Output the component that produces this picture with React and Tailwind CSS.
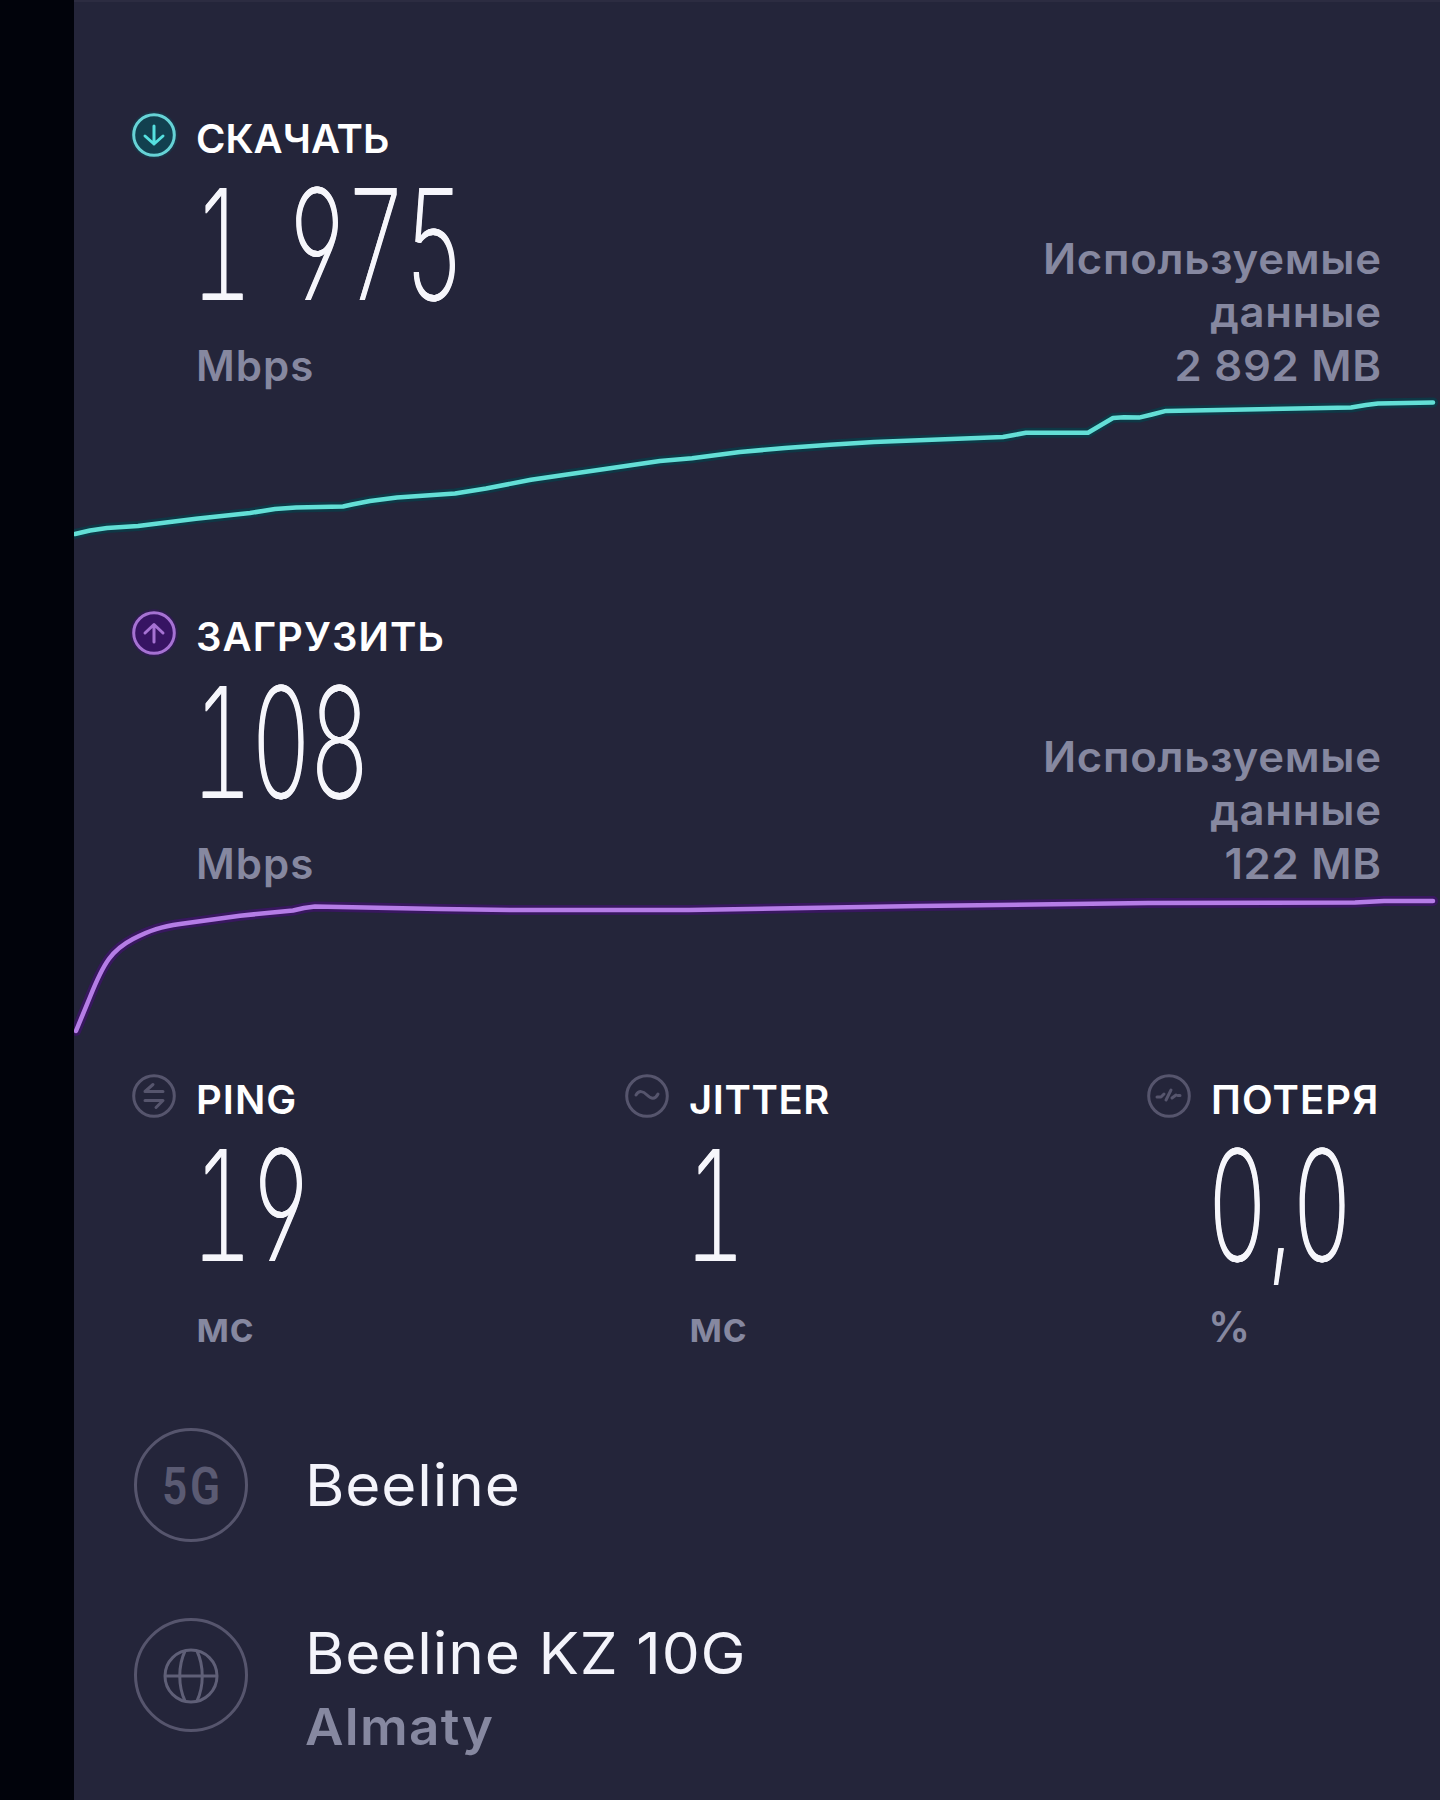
import React from 'react';

const downloadLine =
  'M75 534L90 530.5L107 528L138 526L196 518.8L250 513L275 509L296 507.5L343 506.5L352 504.5L370 501L397 497.5L455 493.5L486 488.5L531 479.8L598 470L660 461L692 458.3L740 452L785 448L830 444.7L874 442L1003 437L1014 435L1026 432.7L1088 432.7L1113 418L1124 417.3L1139 417.6L1152 414.5L1166 410.9L1351 407.5L1366 405L1378 403.4L1433 402.4';
const uploadLine =
  'M76 1031L90 997C104 962 112 950 133 939C150 930 162 926.5 180 924L240 915.7L293 910.5L304 908L315 906.5L440 909L517 910L689 910L919 906L1148 903L1355 902.5L1384 901L1433 901';

const RingIcon = ({ color, fill = 'none', children }) => (
  <svg
    viewBox="0 0 44 44"
    className="h-11 w-11 shrink-0 overflow-visible"
    fill="none"
    stroke={color}
    strokeWidth="3"
    strokeLinecap="round"
    strokeLinejoin="round"
  >
    {fill !== 'none' && <circle cx="22" cy="22" r="20.3" stroke={fill} strokeWidth="7" opacity="0.5" />}
    <circle cx="22" cy="22" r="20.3" strokeWidth="3" fill={fill} />
    {children}
  </svg>
);

const DownIcon = () => (
  <RingIcon color="#66d3d6" fill="#12404f">
    <path d="M22 13V31M13 23l9 8 9-8" stroke="#55e0e0" />
  </RingIcon>
);

const UpIcon = () => (
  <RingIcon color="#a672d3" fill="#371463">
    <path d="M22 31V13.5M13 22l9-8.5 9 8.5" />
  </RingIcon>
);

const PingIcon = () => (
  <RingIcon color="#56556d">
    <path d="M31 17.5H13l8-7M13 26.5h18l-7 7" />
  </RingIcon>
);

const JitterIcon = () => (
  <RingIcon color="#56556d">
    <path d="M11 21c3-5 7-4 11 0s8 5 11-1" />
  </RingIcon>
);

const LossIcon = () => (
  <RingIcon color="#56556d">
    <path d="M10 23h4l3-3M19 26l5-10M25 24l4-3M31 21.5h2" />
  </RingIcon>
);

const Metric = ({ icon, label, labelClass = '', value, valueClass = 'tracking-[-3.3px]', unit, unitClass = '' }) => (
  <div className="flex gap-[20px]">
    {icon}
    <div className="text-[40px]">
      <div className={`whitespace-nowrap font-semibold leading-[52px] text-white ${labelClass}`}>{label}</div>
      {/* Narrow digits: the slight horizontal shadow evens out stem weight after scaling */}
      <div
        className={`-ml-1 mt-[9px] h-[140px] w-[57px] origin-left scale-x-[0.61] whitespace-pre text-[154px] font-extralight leading-[140px] text-[#f6f6fb] [font-feature-settings:'tnum','cv04'] [text-shadow:0.8px_0_0_#f6f6fb,-0.8px_0_0_#f6f6fb] [word-spacing:21px] ${valueClass}`}
      >
        {value}
      </div>
      <div className={`mt-[27px] text-[42px] leading-[50px] text-[#8688a0] [font-weight:560] ${unitClass}`}>{unit}</div>
    </div>
  </div>
);

const UsedData = ({ amount }) => (
  <div className="-mb-px -mr-[2px] origin-right scale-x-[1.04] self-end text-right text-[42px] leading-[53.5px] tracking-[0.7px] text-[#8688a0] [font-weight:560]">
    Используемые
    <br />
    данные
    <br />
    {amount}
  </div>
);

const Chart = ({ d, top, stroke, glow }) => (
  <svg
    viewBox={`74 ${top} 1366 150`}
    className="mt-[5px] block h-[150px] w-[1366px]"
    fill="none"
    strokeLinecap="round"
    strokeLinejoin="round"
  >
    <path d={d} stroke={glow} strokeWidth="10" opacity="0.7" />
    <path d={d} stroke={stroke} strokeWidth="4.5" />
  </svg>
);

export default function App() {
  return (
    <div className="flex h-[1800px] w-[1440px] overflow-hidden bg-[#01030b] font-['Inter',sans-serif]">
      <main className="ml-[74px] w-[1366px] border-t-2 border-[#2c2c41] bg-[#24253a] pt-[111px]">
        <section className="h-[498px]">
          <div className="flex justify-between pl-[58px] pr-[60px]">
            <Metric icon={<DownIcon />} label="СКАЧАТЬ" value="1 975" unit="Mbps" unitClass="tracking-[1px]" />
            <UsedData amount="2 892 MB" />
          </div>
          <Chart d={downloadLine} top={396} stroke="#63dfd6" glow="#06404c" />
        </section>

        <section className="h-[463px]">
          <div className="flex justify-between pl-[58px] pr-[60px]">
            <Metric
              icon={<UpIcon />}
              label="ЗАГРУЗИТЬ"
              labelClass="tracking-[1.1px]"
              value="108"
              unit="Mbps"
              unitClass="tracking-[1px]"
            />
            <UsedData amount="122 MB" />
          </div>
          <Chart d={uploadLine} top={894} stroke="#b57de6" glow="#42116f" />
        </section>

        <section className="flex h-[354px] pl-[58px]">
          <div className="w-[493px]">
            <Metric icon={<PingIcon />} label="PING" labelClass="tracking-[1px]" value="19" unit="мс" />
          </div>
          <div className="w-[522px]">
            <Metric icon={<JitterIcon />} label="JITTER" labelClass="tracking-[0.6px]" value="1" unit="мс" />
          </div>
          <Metric
            icon={<LossIcon />}
            label="ПОТЕРЯ"
            labelClass="tracking-[1.1px]"
            value="0,0"
            valueClass="tracking-[-1px]"
            unit="%"
            unitClass="-ml-[3px]"
          />
        </section>

        <section className="flex flex-col gap-[76px] pl-[60px] text-[58px] text-[#f4f4fb]">
          <div className="flex h-[114px] items-center gap-[57px]">
            <div className="flex h-[114px] w-[114px] items-center justify-center rounded-full border-[3px] border-[#56556d] text-[#5b5b73]">
              <span className="mt-1 scale-x-[0.85] pl-[3px] font-['Roboto'] text-[52px] font-semibold tracking-[3px]">5G</span>
            </div>
            <span className="origin-left scale-x-[1.04] tracking-[0.8px]">Beeline</span>
          </div>
          <div className="flex h-[114px] gap-[57px]">
            <div className="flex h-[114px] w-[114px] items-center justify-center rounded-full border-[3px] border-[#56556d]">
              <svg viewBox="0 0 56 56" className="mt-[2px] h-14 w-14" fill="none" stroke="#5f5f77" strokeWidth="3">
                <circle cx="28" cy="28" r="26" />
                <path d="M2 28h52M22 3c-7 15-7 35 0 50M34 3c7 15 7 35 0 50" />
              </svg>
            </div>
            <div className="origin-left scale-x-[1.04] whitespace-nowrap">
              <div className="leading-[70px] tracking-[0.8px]">Beeline KZ 10G</div>
              <div className="text-[51px] leading-[78px] tracking-[1.2px] text-[#8688a0] [font-weight:560]">Almaty</div>
            </div>
          </div>
        </section>
      </main>
    </div>
  );
}
